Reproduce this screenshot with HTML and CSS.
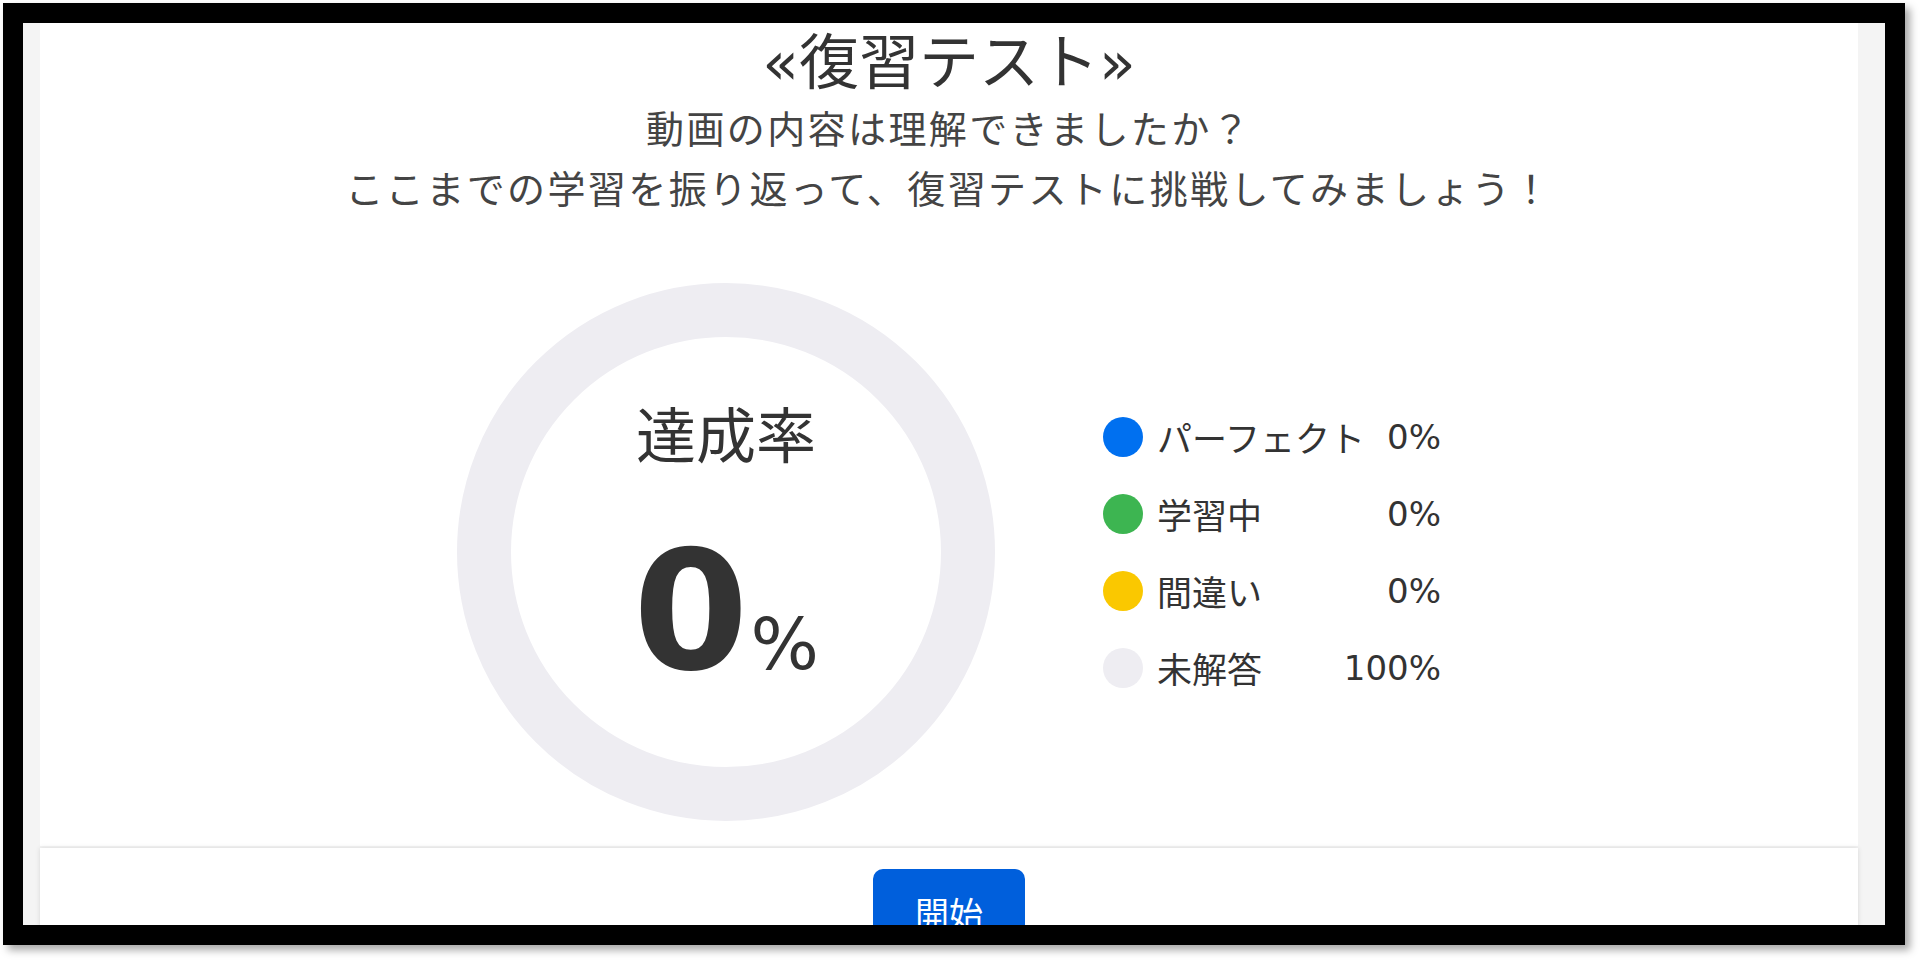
FILE: index.html
```html
<!DOCTYPE html>
<html lang="ja">
<head>
    <meta charset="UTF-8">
    <meta name="viewport" content="width=device-width, initial-scale=1.0">
    <title>復習テスト</title>
    <link rel="stylesheet" href="styles.css">
</head>
<body>

    <div class="frame">
        <div class="page">

            <div class="card">
                <h1 class="title">«復習テスト»</h1>
                <p class="lead">動画の内容は理解できましたか？<br>ここまでの学習を振り返って、復習テストに挑戦してみましょう！</p>

                <div class="chart">
                    <div class="ring">
                        <div class="ring-label">達成率</div>
                        <div class="ring-value"><span class="num">0</span><span class="pct">%</span></div>
                    </div>

                    <ul class="legend">
                        <li><span class="dot blue"></span><span class="name">パーフェクト</span><span class="val">0%</span></li>
                        <li><span class="dot green"></span><span class="name">学習中</span><span class="val">0%</span></li>
                        <li><span class="dot yellow"></span><span class="name">間違い</span><span class="val">0%</span></li>
                        <li><span class="dot gray"></span><span class="name">未解答</span><span class="val">100%</span></li>
                    </ul>
                </div>
            </div>

            <div class="card footer">
                <button class="start">開始</button>
            </div>

        </div>
    </div>

</body>
</html>
```

FILE: styles.css
```css
body {
    margin: 0;
    background-color: #fff;
    color: #333;
    font-family: "DejaVu Sans", "Noto Sans CJK JP", sans-serif;
    height: 960px;
    overflow: hidden;
}
.frame {
    margin: 3px 0 0 3px;
    width: 1902px;
    height: 942px;
    box-sizing: border-box;
    border: 20px solid #000;
    box-shadow: 5px 5px 8px rgba(0, 0, 0, 0.35);
    overflow: hidden;
}
.page {
    background-color: #f4f4f4;
    height: 100%;
    padding: 0 27px 0 17px;
    display: flex;
    flex-direction: column;
}
.card {
    background-color: #fff;
}
.title {
    margin: 0;
    padding-top: 6px;
    font-size: 60px;
    font-weight: normal;
    line-height: 68px;
    text-align: center;
}
.lead {
    margin: 3px 0 0;
    font-size: 38px;
    letter-spacing: 2.4px;
    line-height: 60px;
    text-align: center;
    color: #444;
}
.chart {
    display: flex;
    justify-content: center;
    align-items: center;
    gap: 108px;
    margin-top: 63px;
    padding-bottom: 25px;
}
.ring {
    width: 538px;
    height: 538px;
    box-sizing: border-box;
    border: 54px solid #eeedf2;
    border-radius: 50%;
    display: flex;
    flex-direction: column;
    align-items: center;
    justify-content: center;
}
.ring-label {
    font-size: 60px;
    line-height: 60px;
    margin-top: -2px;
}
.ring-value {
    margin-top: 62px;
    line-height: 1;
    white-space: nowrap;
}
.num {
    font-size: 166px;
    font-weight: bold;
}
.pct {
    font-size: 72px;
    margin-left: 2px;
}
.legend {
    list-style: none;
    margin: 0;
    padding: 0;
    width: 338px;
}
.legend li {
    display: flex;
    align-items: center;
    height: 40px;
    font-size: 35px;
    margin-bottom: 37px;
}
.legend li:last-child {
    margin-bottom: 0;
}
.dot {
    width: 40px;
    height: 40px;
    border-radius: 50%;
    flex-shrink: 0;
    margin-right: 14px;
}
.blue { background-color: #0070f0; }
.green { background-color: #3db551; }
.yellow { background-color: #fac800; }
.gray { background-color: #eeedf2; }
.val {
    margin-left: auto;
    font-size: 34px;
}
.footer {
    flex: 1;
    margin-top: 2px;
    box-shadow: 0 0 5px rgba(0, 0, 0, 0.12);
    display: flex;
    justify-content: center;
    align-items: flex-start;
    padding-top: 21px;
}
.start {
    background-color: #005fdc;
    color: #fff;
    border: none;
    border-radius: 10px;
    font-family: "Noto Sans CJK JP", sans-serif;
    font-size: 34px;
    line-height: 40px;
    padding: 24px 42px 20px;
}
```
